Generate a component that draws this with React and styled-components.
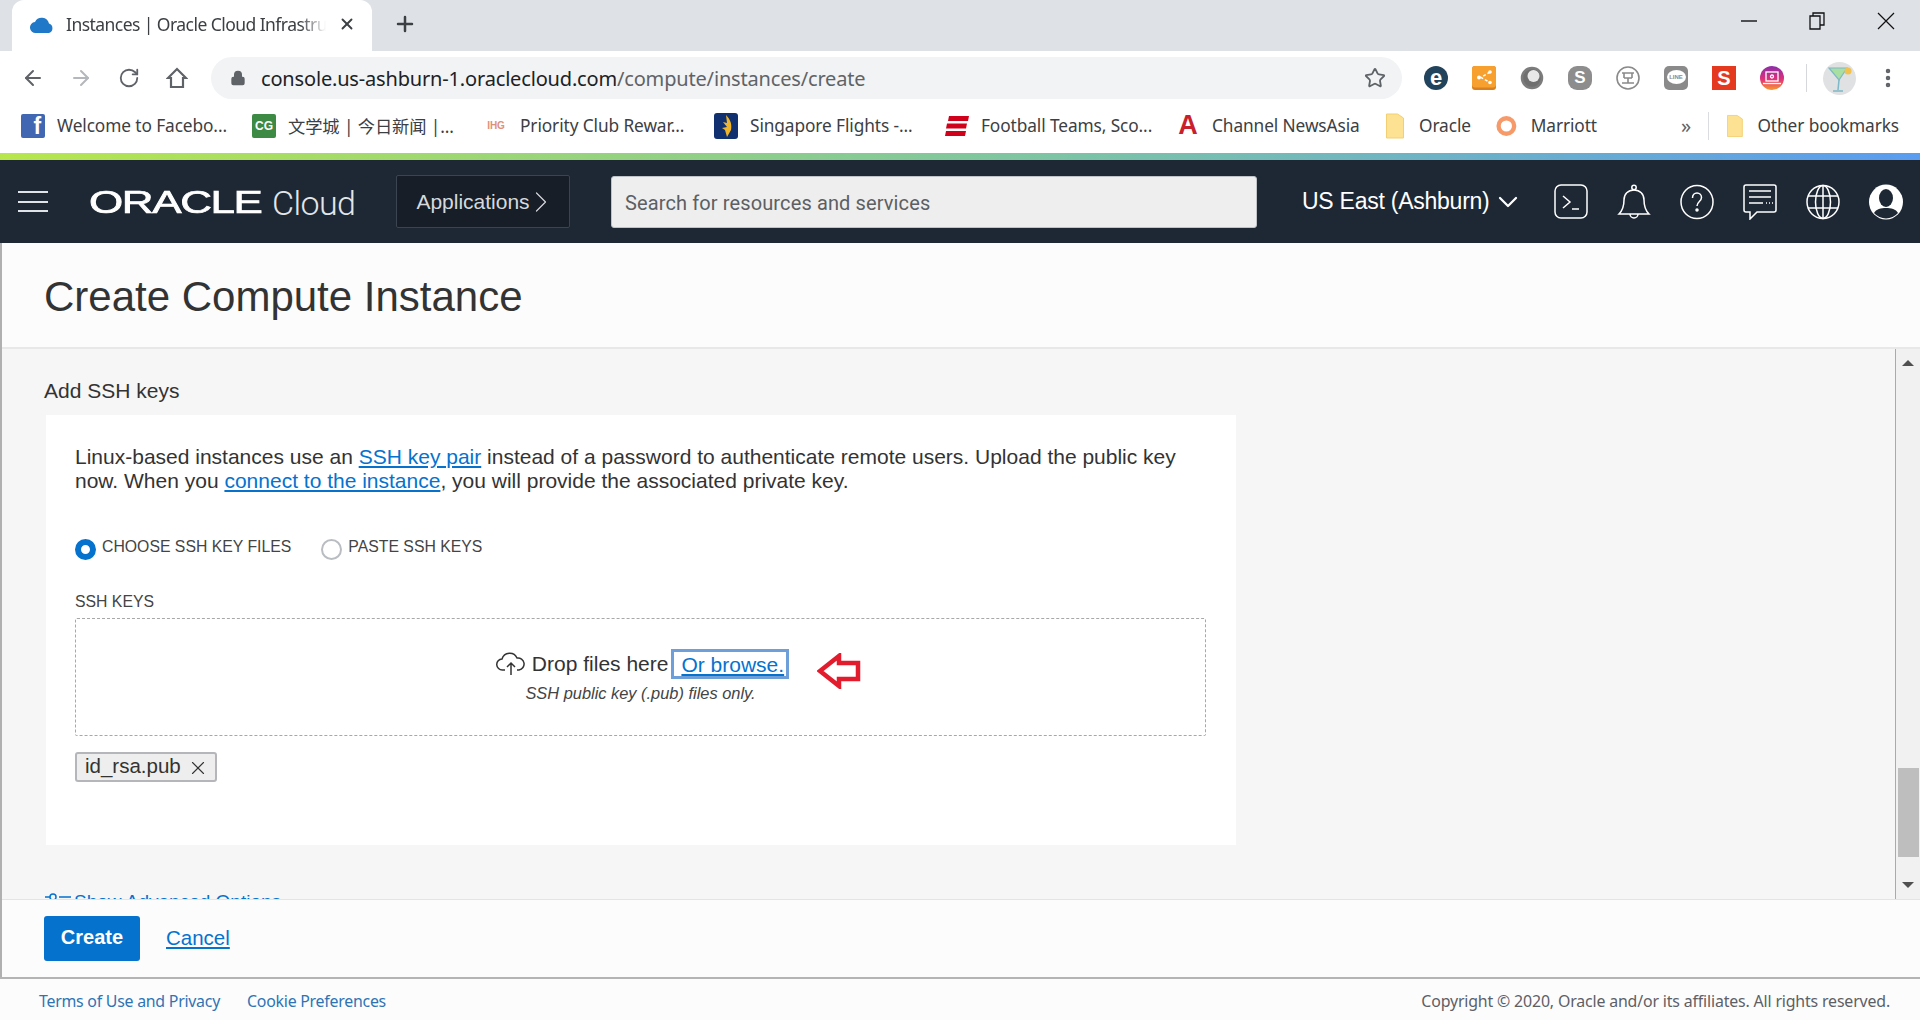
import React from 'react';
import styled, { createGlobalStyle } from 'styled-components';
import { ArrowLeft, ArrowRight, RotateCw, Lock, Star, Plus, X, MoreVertical, ChevronRight, ChevronDown } from 'lucide-react';

const GlobalStyle = createGlobalStyle`
  html, body { margin: 0; padding: 0; height: 100%; overflow: hidden; }
  body { font-family: "Liberation Sans", Arial, sans-serif; color: #333; }
  * { box-sizing: border-box; }
`;

const Page = styled.div`
  width: 1920px;
  height: 1020px;
  display: flex;
  flex-direction: column;
  background: #fff;
  overflow: hidden;
`;

/* browser chrome */
const TabStrip = styled.div`
  height: 51px;
  flex: none;
  display: flex;
  align-items: flex-end;
  background: #dee1e6;
  padding-left: 12px;
`;

const Tab = styled.div`
  width: 360px;
  height: 51px;
  display: flex;
  align-items: center;
  background: #fff;
  border-radius: 12px 12px 0 0;
  padding: 0 16px 3px 18px;
  gap: 12px;
`;

const TabIcon = styled.svg`
  width: 24px;
  height: 20px;
  flex: none;
`;

const TabTitle = styled.span`
  flex: 1;
  font: 17.5px "Noto Sans", sans-serif;
  color: #3c4043;
  white-space: nowrap;
  overflow: hidden;
  letter-spacing: -0.55px;
  -webkit-mask-image: linear-gradient(to right, #000 90%, transparent);
  mask-image: linear-gradient(to right, #000 90%, transparent);
`;

const NewTab = styled.div`
  margin-left: 21px;
  height: 51px;
  padding-bottom: 3px;
  display: flex;
  align-items: center;
  color: #3c4043;
`;

const WindowControls = styled.div`
  margin-left: auto;
  align-self: flex-start;
  height: 42px;
  display: flex;
  align-items: center;
  gap: 52px;
  padding-right: 25px;
`;

const Toolbar = styled.div`
  height: 51px;
  flex: none;
  display: flex;
  align-items: center;
  padding: 3px 0 0 21px;
`;

const NavButton = styled.div`
  width: 24px;
  height: 24px;
  margin-right: 24px;
  display: flex;
  align-items: center;
  justify-content: center;
  color: ${(p) => (p.$off ? '#b4b7bb' : '#5f6368')};
`;

const Omnibox = styled.div`
  width: 1191px;
  height: 42px;
  margin-left: -2px;
  flex: none;
  display: flex;
  align-items: center;
  border-radius: 21px;
  background: #f1f3f4;
  padding: 0 16px 0 19px;
  color: #5f6368;
`;

const Url = styled.span`
  flex: 1;
  margin-left: 15px;
  font: 20px "Noto Sans", sans-serif;
  letter-spacing: -0.17px;
  color: #202124;
  span { color: #5f6368; }
`;

const Extensions = styled.div`
  display: flex;
  align-items: center;
  margin-left: 22px;
  gap: 24px;
`;

const Ext = styled.div`
  width: 24px;
  height: 24px;
  flex: none;
  display: flex;
  align-items: center;
  justify-content: center;
  border-radius: ${(p) => p.$radius || '50%'};
  background: ${(p) => p.$bg};
  color: #fff;
  font: bold ${(p) => p.$size || 15}px "Liberation Sans", sans-serif;
`;

const LineBubble = styled.span`
  width: 19px;
  height: 14px;
  margin-top: -2px;
  display: flex;
  align-items: center;
  justify-content: center;
  border-radius: 50%;
  background: #fff;
  color: #8a8a8a;
  font: bold 6px "Liberation Sans", sans-serif;
`;

const ToolbarDivider = styled.div`
  width: 1px;
  height: 28px;
  background: #d5d7da;
  margin: 0 -8px 0 -2px;
`;

const Avatar = styled.div`
  width: 33px;
  height: 33px;
  border-radius: 50%;
  background: #dfe1e3;
  display: flex;
  align-items: center;
  justify-content: center;
  margin-right: -4px;
`;

const BookmarkBar = styled.div`
  height: 51px;
  flex: none;
  display: flex;
  align-items: center;
  padding: 0 0 4px 21px;
`;

const Bookmark = styled.div`
  display: flex;
  align-items: center;
  flex: none;
  gap: ${(p) => p.$gap || 12}px;
  width: ${(p) => p.$w}px;
  font: 17.3px "Noto Sans", "Noto Sans CJK SC", sans-serif;
  letter-spacing: -0.1px;
  color: #3c4043;
  white-space: nowrap;
`;

const Favicon = styled.div`
  width: 24px;
  height: 24px;
  flex: none;
  display: flex;
  align-items: ${(p) => (p.$corner ? 'flex-end' : 'center')};
  justify-content: ${(p) => (p.$corner ? 'flex-end' : 'center')};
  padding-right: ${(p) => (p.$corner ? 4 : 0)}px;
  background: ${(p) => p.$bg || 'transparent'};
  color: ${(p) => p.$color || '#fff'};
  font: bold ${(p) => p.$size || 14}px/1 "Liberation Sans", sans-serif;
  border-radius: 2px;
`;

const More = styled.div`
  width: 22px;
  margin-left: 78px;
  color: #5f6368;
  font: 20px "Noto Sans", sans-serif;
  text-align: center;
`;

const BarDivider = styled.div`
  width: 1px;
  height: 28px;
  margin: 0 18px 0 11px;
  background: #dadce0;
`;

const Gradient = styled.div`
  height: 7px;
  flex: none;
  background: linear-gradient(to right, #b7e64c 0%, #7cc4a4 55%, #5a9cf0 100%);
`;

/* console header */
const Header = styled.header`
  height: 83px;
  flex: none;
  display: flex;
  align-items: center;
  background: #1e2835;
  color: #fff;
  padding-left: 18px;
`;

const Burger = styled.div`
  width: 30px;
  height: 21px;
  border-top: 2px solid #dfe3e7;
  border-bottom: 2px solid #dfe3e7;
  position: relative;
  &::after {
    content: '';
    position: absolute;
    left: 0;
    right: 0;
    top: 7.5px;
    height: 2px;
    background: #dfe3e7;
  }
`;

const Logo = styled.div`
  width: 307px;
  margin-left: 41px;
  padding-top: 3px;
  display: flex;
  align-items: center;
`;

const LogoMark = styled.span`
  display: inline-block;
  width: 183px;
  font: 31px "Liberation Sans", sans-serif;
  letter-spacing: -1px;
  -webkit-text-stroke: 0.7px #fff;
  transform: scaleX(1.42);
  transform-origin: left center;
  color: #fff;
`;

const LogoCloud = styled.span`
  font: 300 34px "Roboto", sans-serif;
  letter-spacing: -0.6px;
  color: #e3e6e9;
`;

const AppsButton = styled.div`
  width: 174px;
  height: 53px;
  display: flex;
  align-items: center;
  justify-content: center;
  background: #171e27;
  border: 1px solid #3a4551;
  border-radius: 2px;
  font-size: 21px;
  color: #d5d9dd;
  svg { margin: 0 -9px 0 -7px; }
`;

const SearchBox = styled.div`
  width: 646px;
  height: 52px;
  margin-left: 41px;
  display: flex;
  align-items: center;
  padding: 2px 0 0 13px;
  background: #eeeeee;
  border: 1px solid #bfc3c8;
  border-radius: 3px;
  font: 20px "Roboto", sans-serif;
  letter-spacing: 0.12px;
  color: #5c5f63;
`;

const Region = styled.div`
  margin-left: 45px;
  flex: none;
  display: flex;
  align-items: center;
  gap: 2px;
  font-size: 23px;
  color: #fff;
  width: 218px;
  letter-spacing: -0.25px;
  white-space: nowrap;
  svg { flex: none; }
`;

const HeaderIcons = styled.div`
  margin-left: 34px;
  display: flex;
  align-items: center;
  gap: 29px;
`;

const HeaderIcon = styled.svg`
  width: 34px;
  height: 36px;
  flex: none;
  fill: none;
  stroke: ${(p) => (p.$solid ? 'none' : '#fff')};
  stroke-width: 1.5;
`;

/* page */
const Main = styled.main`
  flex: 1;
  min-height: 0;
  display: flex;
  flex-direction: column;
  border-left: 2px solid #b0b0b0;
`;

const TitleBar = styled.div`
  height: 106px;
  flex: none;
  display: flex;
  align-items: center;
  padding: 4px 0 0 42px;
  background: #fcfcfc;
  border-bottom: 2px solid #e8e8e8;
`;

const Title = styled.h1`
  margin: 0;
  font-size: 42px;
  font-weight: 400;
  color: #333;
`;

const BodyRow = styled.div`
  flex: 1;
  min-height: 0;
  display: flex;
`;

const Content = styled.div`
  flex: 1;
  min-width: 0;
  overflow: hidden;
  background: #f6f6f6;
  padding: 30px 0 0 42px;
`;

const SectionTitle = styled.h2`
  margin: 0 0 12px;
  font-size: 21px;
  line-height: 24px;
  font-weight: 400;
  color: #333;
`;

const Card = styled.section`
  width: 1190px;
  height: 430px;
  margin-left: 2px;
  padding: 30px 29px 0;
  background: #fff;
`;

const Lead = styled.p`
  margin: 0;
  font-size: 21px;
  line-height: 24px;
  color: #333;
`;

const Link = styled.a`
  color: #0572ce;
  text-decoration: underline;
`;

const RadioRow = styled.div`
  display: flex;
  margin-top: 44px;
  gap: 30px;
`;

const RadioOption = styled.label`
  display: flex;
  gap: 6px;
  font-size: 15.8px;
  line-height: 20px;
  color: #444;
`;

const RadioMark = styled.span`
  width: 21px;
  height: 21px;
  margin-top: 2px;
  border-radius: 50%;
  background: #fff;
  border: ${(p) => (p.$on ? '6.5px solid #0572ce' : '2px solid #b9bdc1')};
`;

const FieldLabel = styled.div`
  margin-top: 32px;
  font-size: 15.8px;
  line-height: 20px;
  color: #444;
`;

const DropZone = styled.div`
  width: 1131px;
  height: 118px;
  margin-top: 6px;
  padding-top: 30px;
  border: 1px dashed #a8a8a8;
  border-radius: 2px;
  display: flex;
  flex-direction: column;
  align-items: center;
`;

const DropLine = styled.div`
  display: flex;
  align-items: center;
  font-size: 21px;
  line-height: 30px;
  color: #333;
  position: relative;
  left: 2px;
`;

const CloudIcon = styled.svg`
  width: 30px;
  height: 24px;
  flex: none;
  margin-right: 6px;
`;

const BrowseLink = styled(Link)`
  height: 30px;
  margin-left: 3px;
  padding: 0 2px 0 7px;
  line-height: 26px;
  border: 3px solid #6f9fd8;
`;

const Arrow = styled.svg`
  position: absolute;
  left: calc(100% + 28px);
  top: 4px;
  width: 44px;
  height: 36px;
`;

const DropHint = styled.div`
  font-size: 16.4px;
  font-style: italic;
  line-height: 20px;
  margin-top: 4px;
  color: #444;
`;

const Chip = styled.div`
  width: 142px;
  height: 30px;
  margin-top: 16px;
  display: flex;
  align-items: center;
  justify-content: space-between;
  padding: 0 6px 3px 8px;
  background: #eeeeee;
  border: 2px solid #b4b6b9;
  border-radius: 3px;
  font-size: 20.5px;
  color: #333;
  svg { margin-top: 4px; }
`;

const AdvancedLink = styled.div`
  margin: 46px 0 0 1px;
  display: flex;
  align-items: center;
  gap: 3px;
  font-size: 19px;
  color: #0572ce;
`;

const Scrollbar = styled.div`
  width: 25px;
  flex: none;
  display: flex;
  flex-direction: column;
  align-items: center;
  background: #f1f1f1;
  border-left: 1px solid #aaa;
`;

const ScrollArrow = styled.div`
  margin-top: ${(p) => p.$top}px;
  width: 0;
  height: 0;
  border-left: 6px solid transparent;
  border-right: 6px solid transparent;
  ${(p) => (p.$down ? 'border-top: 6px solid #505050;' : 'border-bottom: 6px solid #505050;')}
`;

const ScrollThumb = styled.div`
  width: 21px;
  height: 89px;
  margin-top: 402px;
  background: #bebebe;
`;

const ActionBar = styled.div`
  height: 78px;
  flex: none;
  display: flex;
  align-items: center;
  gap: 26px;
  padding: 0 0 0 42px;
  background: #fcfcfc;
  border-top: 1px solid #e4e4e4;
`;

const CreateButton = styled.button`
  width: 96px;
  height: 45px;
  border: 0;
  border-radius: 3px;
  background: #0572ce;
  color: #fff;
  font: bold 20px "Liberation Sans", sans-serif;
  padding: 0 0 2px;
`;

const CancelLink = styled(Link)`
  font-size: 20.5px;
  margin-top: -2px;
`;

const Footer = styled.footer`
  height: 43px;
  flex: none;
  display: flex;
  align-items: center;
  padding: 2px 30px 0 39px;
  background: #fcfcfc;
  border-top: 2px solid #b4b4b4;
  font: 15.9px "Noto Sans", sans-serif;
  letter-spacing: -0.25px;
`;

const FooterLink = styled.a`
  color: #2e74b5;
  margin-right: 27px;
`;

const Copyright = styled.span`
  margin-left: auto;
  letter-spacing: -0.16px;
  color: #5c6066;
`;

function FolderIcon() {
  return (
    <svg width="21" height="26" viewBox="0 0 21 26">
      <path d="M.5 1h11l6 4v20H.5z" fill="#fde293" stroke="#f2cf72" />
    </svg>
  );
}

function MarriottIcon() {
  return (
    <svg width="24" height="24" viewBox="0 0 24 24">
      <circle cx="12" cy="12" r="9" fill="none" stroke="#f79a6a" strokeWidth="5" />
    </svg>
  );
}

function BirdIcon() {
  return (
    <svg width="24" height="26" viewBox="0 0 24 26">
      <rect width="24" height="26" rx="3" fill="#10306f" />
      <path d="M12 2c5 5 6 10 5 15l-4 7-2-7-3-2 5-1-4-5 4 1z" fill="#f0b429" />
    </svg>
  );
}

function StripesIcon() {
  return (
    <svg width="24" height="24" viewBox="0 0 24 24" fill="#d0021b">
      <path d="M4 2h20l-1 5H3zM2 9.500h20l-1 5H1zM1 17h20l-1 5H0z" />
    </svg>
  );
}

const bookmarks = [
  { w: 231, text: 'Welcome to Facebo...', icon: <Favicon $bg="#4267b2" $size={23} $corner>f</Favicon> },
  { w: 232, text: '文学城 | 今日新闻 |...', icon: <Favicon $bg="#3d8a45" $size={12}>CG</Favicon> },
  { w: 230, text: 'Priority Club Rewar...', icon: <Favicon $color="#e0907a" $size={10}>IHG</Favicon> },
  { w: 231, text: 'Singapore Flights -...', icon: <BirdIcon /> },
  { w: 231, text: 'Football Teams, Sco...', icon: <StripesIcon /> },
  { w: 210, text: 'Channel NewsAsia', icon: <Favicon $color="#c8202d" $size={27}>A</Favicon> },
  { w: 110, text: 'Oracle', icon: <FolderIcon /> },
  { w: 101, text: 'Marriott', gap: 14, icon: <MarriottIcon /> },
];

function CloudFavicon() {
  return (
    <TabIcon viewBox="0 0 24 20">
      <path d="M6 19a5.500 5.500 0 0 1-1-11 7.500 7.500 0 0 1 14 1.500 5 5 0 0 1 0 9.500z" fill="#1f78c8" />
    </TabIcon>
  );
}

function HomeIcon() {
  return (
    <svg width="22" height="24" viewBox="0 0 22 24" fill="none" stroke="#5f6368" strokeWidth="2.200">
      <path d="M2 12 11 3l9 9h-3v9H5v-9z" />
    </svg>
  );
}

function WindowButtons() {
  return (
    <WindowControls>
      <svg width="16" height="16" viewBox="0 0 16 16"><path d="M0 8h16" stroke="#111" strokeWidth="1.400" /></svg>
      <svg width="16" height="18" viewBox="0 0 16 18" fill="none" stroke="#111" strokeWidth="1.300"><path d="M1 4h10v13H1z" /><path d="M4 4V1h11v12h-4" /></svg>
      <svg width="18" height="18" viewBox="0 0 18 18" stroke="#111" strokeWidth="1.200"><path d="M1 1l16 16M17 1 1 17" /></svg>
    </WindowControls>
  );
}

function ShareExt() {
  return (
    <svg width="24" height="24" viewBox="0 0 24 24">
      <rect width="24" height="24" rx="3" fill="#d97f1e" />
      <rect width="24" height="21.500" rx="3" fill="#f7a02f" />
      <path d="M18 6l-9 5.500 9 5" fill="none" stroke="#fff" strokeWidth="1.500" strokeDasharray="3 2" />
      <circle cx="7" cy="11.500" r="2" fill="#fff" />
      <circle cx="18" cy="6" r="1.800" fill="#fff" />
      <circle cx="18" cy="16.500" r="1.800" fill="#fff" />
    </svg>
  );
}

function OrbExt() {
  return (
    <svg width="24" height="24" viewBox="0 0 24 24">
      <circle cx="12" cy="12" r="10" fill="#6f6f6f" />
      <circle cx="13.500" cy="10" r="6" fill="#e8e8e8" />
      <circle cx="12" cy="12" r="10" fill="none" stroke="#7c7c7c" strokeWidth="2.500" />
    </svg>
  );
}

function BadgeExt() {
  return (
    <svg width="24" height="24" viewBox="0 0 24 24" fill="none" stroke="#8a8a8a" strokeWidth="1.600">
      <circle cx="12" cy="12" r="11" />
      <path d="M6 7h12M6 17h12M8 12h8M8 7v5M16 7v5M12 12v5" />
    </svg>
  );
}

function LaptopExt() {
  return (
    <Ext $bg="linear-gradient(#8a2ea8, #e0307a 55%, #f79b2d)">
      <svg width="18" height="16" viewBox="0 0 18 16" fill="none" stroke="#fff" strokeWidth="1.300">
        <rect x="3" y="2" width="12" height="9" />
        <path d="M0 13.500h18" />
        <circle cx="9" cy="6.500" r="1.500" />
      </svg>
    </Ext>
  );
}

function MartiniIcon() {
  return (
    <svg width="26" height="30" viewBox="0 0 26 30">
      <path d="M2 5h18l-8 12z" fill="#a9dfa0" stroke="#7fb8c8" strokeWidth="1.200" />
      <path d="M12 17l-1 10M6 28h10" stroke="#7fb8c8" strokeWidth="1.500" fill="none" />
      <circle cx="21" cy="8" r="3.500" fill="#f2c14e" />
    </svg>
  );
}

function Terminal() {
  return (
    <HeaderIcon viewBox="0 0 34 36">
      <rect x="1" y="1" width="32" height="33" rx="6" />
      <path d="M9 12l7 6-7 6M18 25h7" />
    </HeaderIcon>
  );
}

function Bell() {
  return (
    <HeaderIcon viewBox="0 0 34 36">
      <path d="M2 30c4-4 5-8 5-14 0-6 4-10 10-10s10 4 10 10c0 6 1 10 5 14z" />
      <circle cx="17" cy="3.500" r="2.200" />
      <path d="M13 30a4 4 0 0 0 8 0" />
    </HeaderIcon>
  );
}

function Help() {
  return (
    <HeaderIcon viewBox="0 0 34 36">
      <ellipse cx="17" cy="18" rx="16" ry="16.500" />
      <path d="M12.500 14c0-3 2-5 4.500-5s4.500 2 4.500 4.500c0 4-4.500 4-4.500 8.500" />
      <circle cx="17" cy="26" r="1" fill="#fff" />
    </HeaderIcon>
  );
}

function Chat() {
  return (
    <HeaderIcon viewBox="0 0 34 36">
      <path d="M3 1h28a2 2 0 0 1 2 2v23a2 2 0 0 1-2 2H14l-7 7v-7H3a2 2 0 0 1-2-2V3a2 2 0 0 1 2-2z" />
      <path d="M6 7h22M6 13h22M6 19h14M23 19h1M26 19h1M29 19h1" />
    </HeaderIcon>
  );
}

function Globe() {
  return (
    <HeaderIcon viewBox="0 0 34 36">
      <ellipse cx="17" cy="18" rx="16" ry="16.500" />
      <ellipse cx="17" cy="18" rx="7.500" ry="16.500" />
      <path d="M17 1.500v33M2 12h30M2 24h30" />
    </HeaderIcon>
  );
}

function UserIcon() {
  return (
    <HeaderIcon viewBox="0 0 34 36" $solid>
      <ellipse cx="17" cy="18" rx="17" ry="17.500" fill="#fff" />
      <ellipse cx="17" cy="14" rx="7" ry="9" fill="#1e2835" />
      <path d="M5 29c2-4 7-5 12-5s10 1 12 5a16 16 0 0 1-24 0z" fill="#1e2835" />
    </HeaderIcon>
  );
}

function UploadCloud() {
  return (
    <CloudIcon viewBox="0 0 30 24" fill="none" stroke="#333" strokeWidth="1.500">
      <path d="M9 18H6.500a5.500 5.500 0 0 1-.5-11A8 8 0 0 1 21 6a5.800 5.800 0 0 1 2 12h-2" />
      <path d="M15 23V11M11 15l4-4 4 4" />
    </CloudIcon>
  );
}

export default function App() {
  return (
    <Page>
      <GlobalStyle />
      <TabStrip>
        <Tab>
          <CloudFavicon />
          <TabTitle>Instances | Oracle Cloud Infrastructure</TabTitle>
          <X size={18} color="#3c4043" strokeWidth={2.500} />
        </Tab>
        <NewTab><Plus size={24} strokeWidth={2.500} /></NewTab>
        <WindowButtons />
      </TabStrip>

      <Toolbar>
        <NavButton><ArrowLeft size={24} strokeWidth={2} /></NavButton>
        <NavButton $off><ArrowRight size={24} strokeWidth={2} /></NavButton>
        <NavButton><RotateCw size={22} strokeWidth={2} /></NavButton>
        <NavButton><HomeIcon /></NavButton>
        <Omnibox>
          <Lock size={16} fill="#5f6368" strokeWidth={2} />
          <Url>console.us-ashburn-1.oraclecloud.com<span>/compute/instances/create</span></Url>
          <Star size={22} strokeWidth={2} />
        </Omnibox>
        <Extensions>
          <Ext $bg="#22435c" $size={22}>e</Ext>
          <ShareExt />
          <OrbExt />
          <Ext $bg="#8d8d8d" $radius="9px" $size={17}>S</Ext>
          <BadgeExt />
          <Ext $bg="#8a8a8a" $radius="5px"><LineBubble>LINE</LineBubble></Ext>
          <Ext $bg="#e5391f" $radius="0" $size={20}>S</Ext>
          <LaptopExt />
          <ToolbarDivider />
          <Avatar><MartiniIcon /></Avatar>
          <MoreVertical size={24} color="#5f6368" strokeWidth={2.500} />
        </Extensions>
      </Toolbar>

      <BookmarkBar>
        {bookmarks.map((b) => (
          <Bookmark key={b.text} $w={b.w} $gap={b.gap}>
            {b.icon}
            <span>{b.text}</span>
          </Bookmark>
        ))}
        <More>»</More>
        <BarDivider />
        <Bookmark $w={172}>
          <FolderIcon />
          <span>Other bookmarks</span>
        </Bookmark>
      </BookmarkBar>
      <Gradient />

      <Header>
        <Burger />
        <Logo>
          <LogoMark>ORACLE</LogoMark>
          <LogoCloud>Cloud</LogoCloud>
        </Logo>
        <AppsButton>Applications <ChevronRight size={36} strokeWidth={0.800} /></AppsButton>
        <SearchBox>Search for resources and services</SearchBox>
        <Region>US East (Ashburn) <ChevronDown size={32} strokeWidth={1.700} /></Region>
        <HeaderIcons>
          <Terminal />
          <Bell />
          <Help />
          <Chat />
          <Globe />
          <UserIcon />
        </HeaderIcons>
      </Header>

      <Main>
        <TitleBar>
          <Title>Create Compute Instance</Title>
        </TitleBar>
        <BodyRow>
          <Content>
            <SectionTitle>Add SSH keys</SectionTitle>
            <Card>
              <Lead>
                Linux-based instances use an <Link>SSH key pair</Link> instead of a password to authenticate remote users. Upload the public key
                <br />
                now. When you <Link>connect to the instance</Link>, you will provide the associated private key.
              </Lead>
              <RadioRow>
                <RadioOption><RadioMark $on />CHOOSE SSH KEY FILES</RadioOption>
                <RadioOption><RadioMark />PASTE SSH KEYS</RadioOption>
              </RadioRow>
              <FieldLabel>SSH KEYS</FieldLabel>
              <DropZone>
                <DropLine>
                  <UploadCloud />
                  Drop files here
                  <BrowseLink>Or browse.</BrowseLink>
                  <Arrow viewBox="0 0 44 36">
                    <path d="M3 18 22 3v7h19v16H22v7z" fill="none" stroke="#e21c2c" strokeWidth="4.500" />
                  </Arrow>
                </DropLine>
                <DropHint>SSH public key (.pub) files only.</DropHint>
              </DropZone>
              <Chip>id_rsa.pub <X size={22} strokeWidth={1.200} /></Chip>
            </Card>
            <AdvancedLink>
              <svg width="26" height="20" viewBox="0 0 26 20" fill="none" stroke="#0572ce" strokeWidth="1.500">
                <circle cx="8" cy="5" r="3" />
                <path d="M14 5h12M0 5h5" />
              </svg>
              Show Advanced Options
            </AdvancedLink>
          </Content>
          <Scrollbar>
            <ScrollArrow $top={11} />
            <ScrollThumb />
            <ScrollArrow $top={25} $down />
          </Scrollbar>
        </BodyRow>
        <ActionBar>
          <CreateButton>Create</CreateButton>
          <CancelLink>Cancel</CancelLink>
        </ActionBar>
      </Main>

      <Footer>
        <FooterLink>Terms of Use and Privacy</FooterLink>
        <FooterLink>Cookie Preferences</FooterLink>
        <Copyright>Copyright © 2020, Oracle and/or its affiliates. All rights reserved.</Copyright>
      </Footer>
    </Page>
  );
}
